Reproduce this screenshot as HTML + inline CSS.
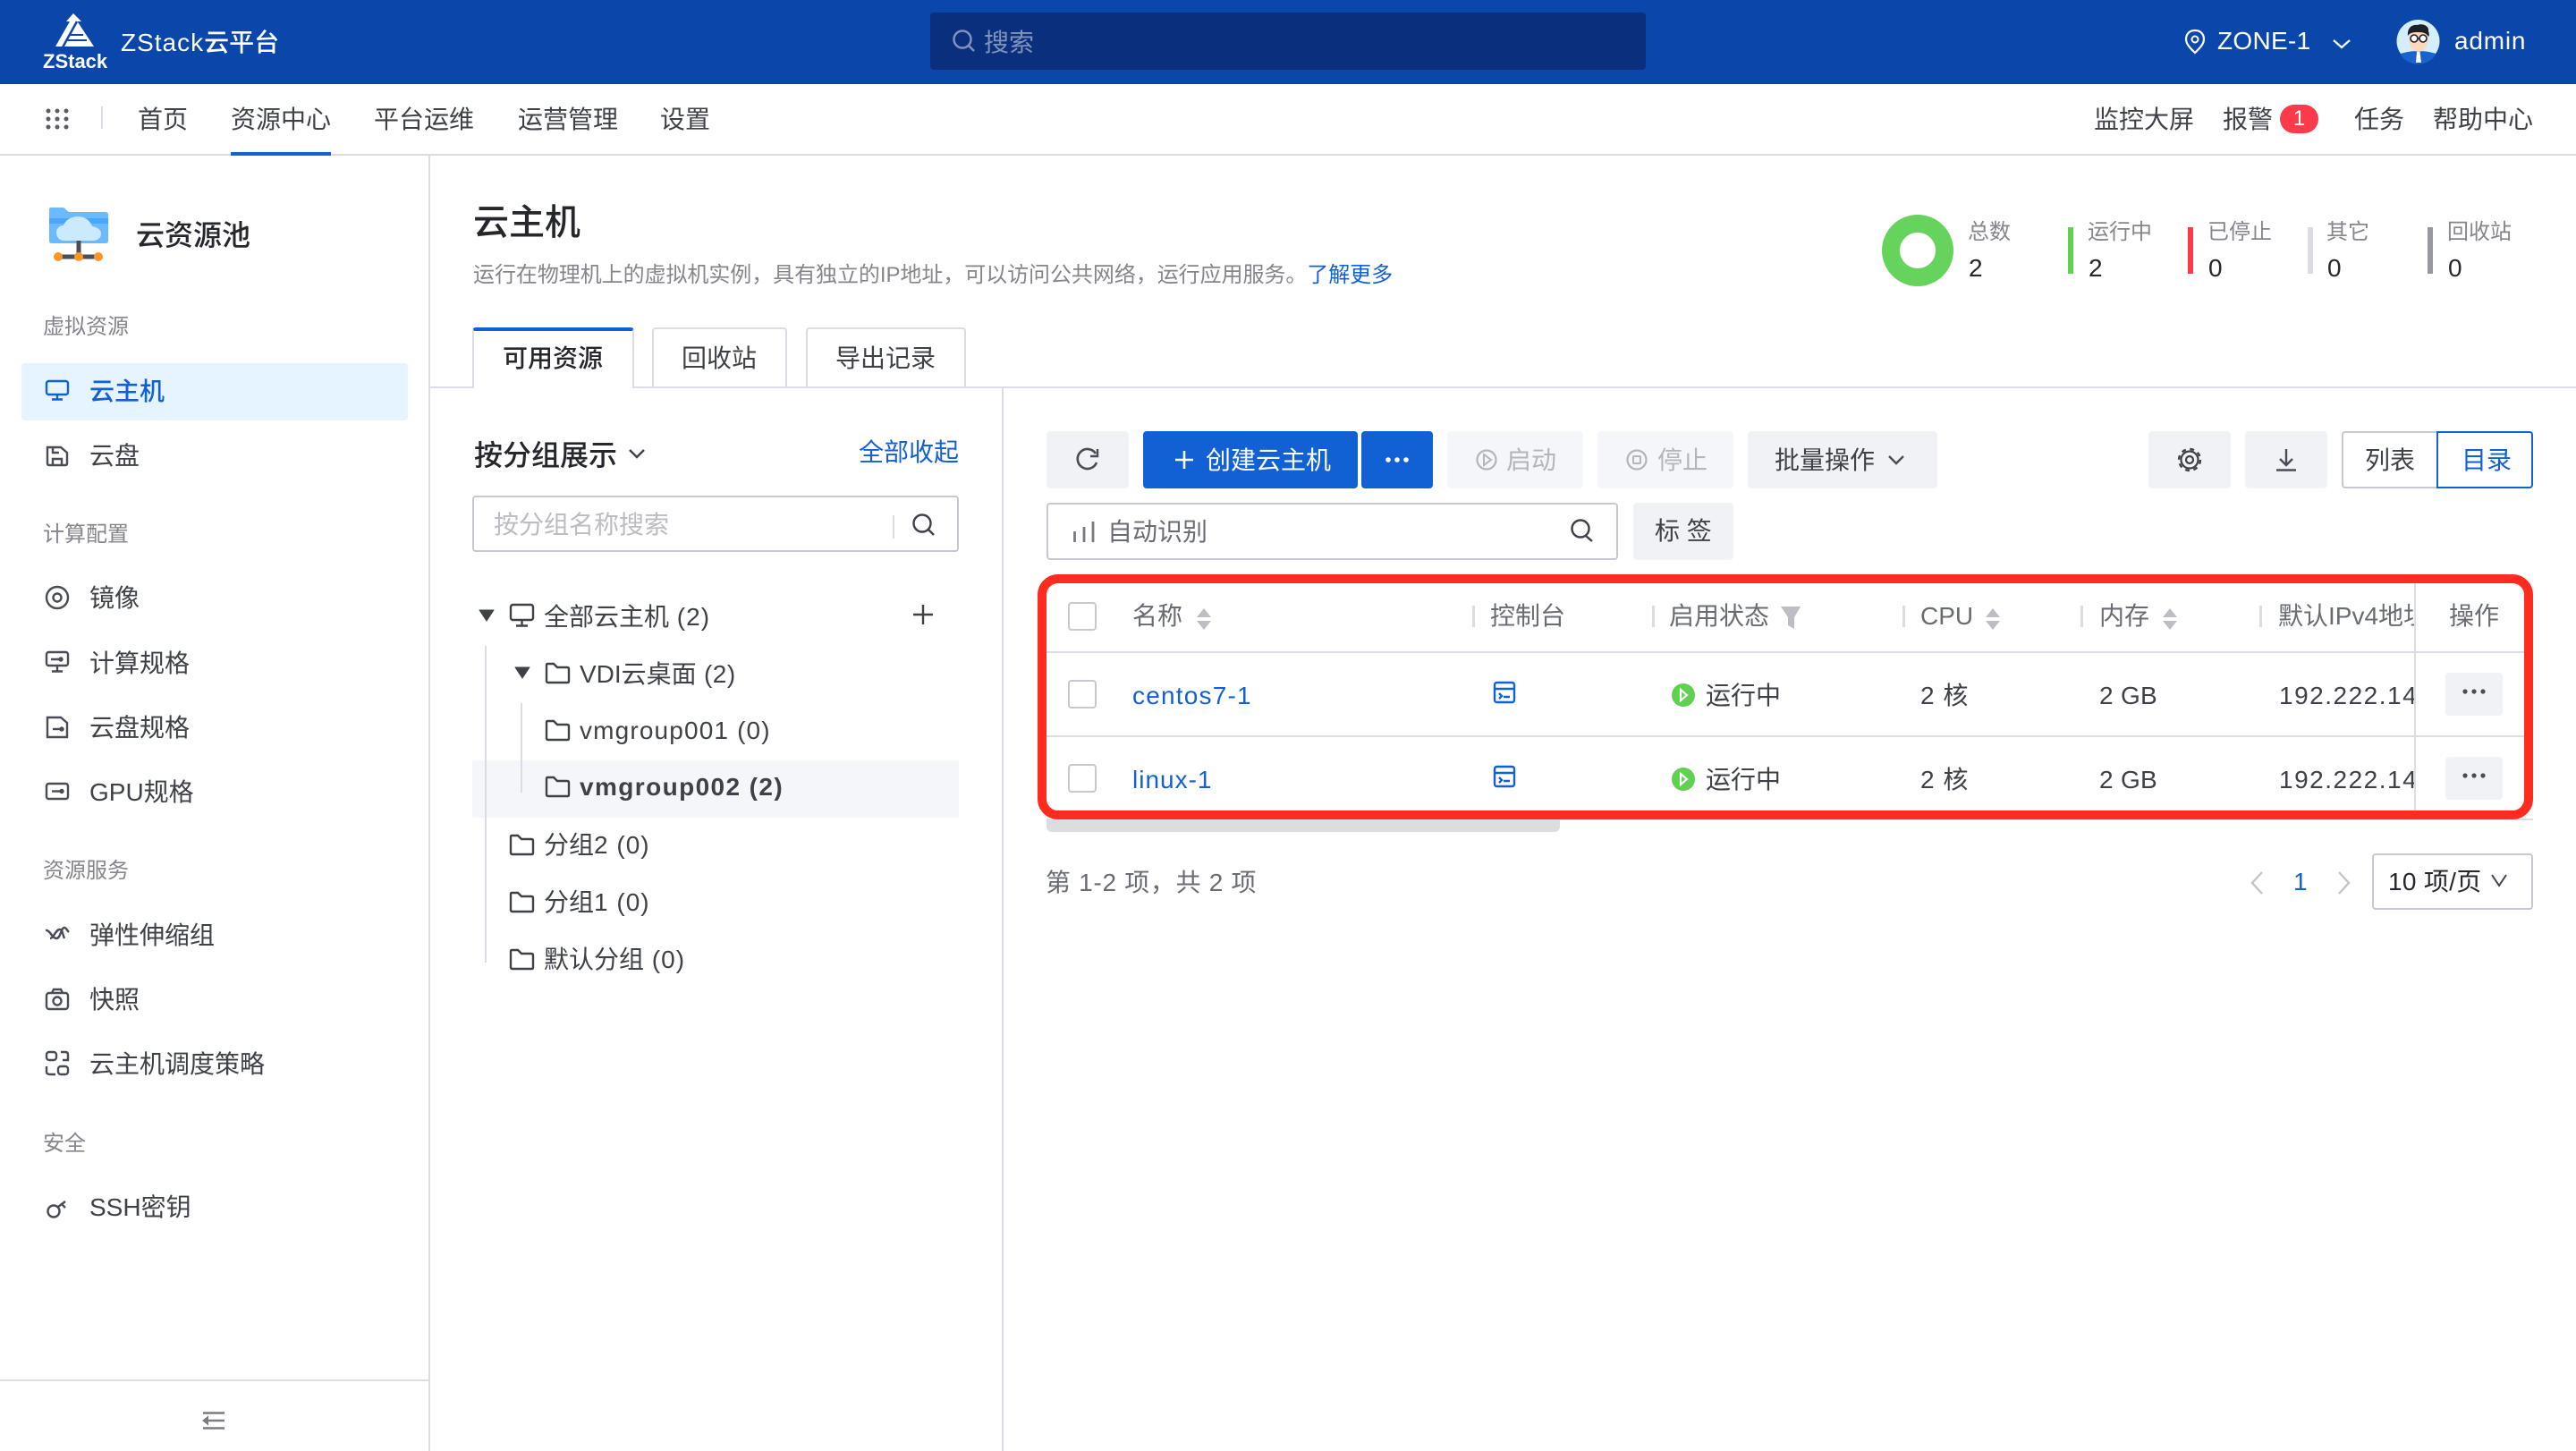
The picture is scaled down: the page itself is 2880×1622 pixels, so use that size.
<!DOCTYPE html>
<html lang="zh-CN">
<head>
<meta charset="utf-8">
<title>ZStack云平台</title>
<style>
html,body{margin:0;padding:0;background:#fff;}
body{position:relative;width:2880px;height:1622px;overflow:hidden;font-family:"Liberation Sans","Noto Sans CJK SC",sans-serif;font-size:28px;color:#3f4148;}
.b{position:absolute;box-sizing:border-box;}
.t{position:absolute;white-space:nowrap;line-height:40px;height:40px;margin:2px 0 0 -1px;z-index:6;}
.n{margin:0;}
.i{margin:1px 0 0 -1px;}
.r{margin:1px 0 0 0;}
.k{letter-spacing:1px;}
.w{color:#fff;}
.s{font-size:24px;color:#85858d;}
.h{color:#6a6c74;}
.bl{color:#1160d4;}
.m{font-weight:500;}
.sv{color:#26272c;}
#ic{position:absolute;left:0;top:0;z-index:5;}
</style>
</head>
<body>
<!-- header -->
<div class="b" style="left:0;top:0;width:2880px;height:94px;background:#0b47ab;"></div>
<div class="b" style="left:1040px;top:14px;width:800px;height:64px;background:#0a2f7c;border-radius:4px;"></div>
<div class="t" style="left:1101px;top:26px;color:#7f93bd;">搜索</div>
<div class="t w n" style="left:48px;top:54px;font-size:22px;font-weight:700;line-height:30px;height:30px;">ZStack</div>
<div class="t w m k" style="left:136px;top:26px;"><span>ZStack</span><span style="letter-spacing:0">云平台</span></div>
<div class="t w n" style="left:2479px;top:26px;letter-spacing:.3px;">ZONE-1</div>
<div class="t w n" style="left:2744px;top:26px;letter-spacing:.8px;">admin</div>

<!-- nav -->
<div class="b" style="left:0;top:172px;width:2880px;height:2px;background:#dcdce4;"></div>
<div class="b" style="left:113px;top:119px;width:2px;height:25px;background:#dcdce4;"></div>
<div class="b" style="left:258px;top:170px;width:112px;height:4px;background:#1160d4;"></div>
<div class="t" style="left:155px;top:112px;">首页</div>
<div class="t" style="left:259px;top:112px;">资源中心</div>
<div class="t" style="left:419px;top:112px;">平台运维</div>
<div class="t" style="left:580px;top:112px;">运营管理</div>
<div class="t" style="left:739px;top:112px;">设置</div>
<div class="t" style="left:2342px;top:112px;">监控大屏</div>
<div class="t" style="left:2486px;top:112px;">报警</div>
<div class="b" style="left:2549px;top:117px;width:43px;height:32px;background:#fb3a4a;border-radius:16px;"></div>
<div class="t w n" style="left:2549px;top:113px;width:43px;text-align:center;font-size:24px;">1</div>
<div class="t" style="left:2633px;top:112px;">任务</div>
<div class="t" style="left:2721px;top:112px;">帮助中心</div>

<!-- sidebar -->
<div class="b" style="left:479px;top:174px;width:2px;height:1448px;background:#dcdce4;"></div>
<div class="b" style="left:0;top:1542px;width:479px;height:2px;background:#dcdce4;"></div>
<div class="t m sv" style="left:153px;top:241px;font-size:32px;">云资源池</div>
<div class="t s r" style="left:48px;top:345px;">虚拟资源</div>
<div class="b" style="left:24px;top:406px;width:432px;height:64px;background:#e6f4ff;border-radius:4px;"></div>
<div class="t bl m i" style="left:101px;top:417px;">云主机</div>
<div class="t i" style="left:101px;top:489px;">云盘</div>
<div class="t s r" style="left:48px;top:577px;">计算配置</div>
<div class="t i" style="left:101px;top:648px;">镜像</div>
<div class="t i" style="left:101px;top:721px;">计算规格</div>
<div class="t i" style="left:101px;top:793px;">云盘规格</div>
<div class="t i" style="left:101px;top:865px;">GPU规格</div>
<div class="t s r" style="left:48px;top:953px;">资源服务</div>
<div class="t i" style="left:101px;top:1025px;">弹性伸缩组</div>
<div class="t i" style="left:101px;top:1097px;">快照</div>
<div class="t i" style="left:101px;top:1169px;">云主机调度策略</div>
<div class="t s r" style="left:48px;top:1258px;">安全</div>
<div class="t i" style="left:101px;top:1329px;">SSH密钥</div>

<!-- page head -->
<div class="t m sv" style="left:530px;top:227px;font-size:40px;">云主机</div>
<div class="t s" style="left:530px;top:286px;letter-spacing:-.06px;">运行在物理机上的虚拟机实例，具有独立的IP地址，可以访问公共网络，运行应用服务。<span class="bl">了解更多</span></div>

<!-- stats -->
<div class="t s" style="left:2201px;top:238px;">总数</div>
<div class="t sv n" style="left:2201px;top:280px;">2</div>
<div class="b" style="left:2312px;top:254px;width:6px;height:52px;background:#5fd04f;"></div>
<div class="t s" style="left:2335px;top:238px;">运行中</div>
<div class="t sv n" style="left:2335px;top:280px;">2</div>
<div class="b" style="left:2446px;top:254px;width:6px;height:52px;background:#fb3a4a;"></div>
<div class="t s" style="left:2469px;top:238px;">已停止</div>
<div class="t sv n" style="left:2469px;top:280px;">0</div>
<div class="b" style="left:2580px;top:254px;width:6px;height:52px;background:#dcdce4;"></div>
<div class="t s" style="left:2602px;top:238px;">其它</div>
<div class="t sv n" style="left:2602px;top:280px;">0</div>
<div class="b" style="left:2714px;top:254px;width:6px;height:52px;background:#97979f;"></div>
<div class="t s" style="left:2737px;top:238px;">回收站</div>
<div class="t sv n" style="left:2737px;top:280px;">0</div>

<!-- tabs -->
<div class="b" style="left:481px;top:432px;width:2399px;height:2px;background:#dcdce4;"></div>
<div class="b" style="left:528px;top:366px;width:181px;height:68px;background:#fff;border:2px solid #dcdce4;border-bottom:none;border-top:4px solid #1160d4;border-radius:4px 4px 0 0;"></div>
<div class="t m sv" style="left:563px;top:379px;">可用资源</div>
<div class="b" style="left:729px;top:366px;width:151px;height:68px;border:2px solid #dcdce4;border-bottom:none;border-radius:4px 4px 0 0;"></div>
<div class="t" style="left:763px;top:379px;">回收站</div>
<div class="b" style="left:901px;top:366px;width:179px;height:68px;border:2px solid #dcdce4;border-bottom:none;border-radius:4px 4px 0 0;"></div>
<div class="t" style="left:935px;top:379px;">导出记录</div>

<!-- group panel -->
<div class="b" style="left:1120px;top:434px;width:2px;height:1188px;background:#dcdce4;"></div>
<div class="t m sv" style="left:531px;top:487px;font-size:32px;">按分组展示</div>
<div class="t bl r" style="left:960px;top:485px;">全部收起</div>
<div class="b" style="left:528px;top:554px;width:544px;height:63px;border:2px solid #c8c8d0;border-radius:4px;"></div>
<div class="t" style="left:553px;top:565px;color:#bcbcc2;">按分组名称搜索</div>
<div class="b" style="left:998px;top:576px;width:2px;height:26px;background:#dcdce4;"></div>
<div class="b" style="left:528px;top:850px;width:544px;height:64px;background:#f5f6fa;"></div>
<div class="b" style="left:542px;top:722px;width:2px;height:354px;background:#dcdce4;"></div>
<div class="b" style="left:582px;top:786px;width:2px;height:100px;background:#dcdce4;"></div>
<div class="t r" style="left:608px;top:669px;">全部云主机<span class="k"> (2)</span></div>
<div class="t r" style="left:648px;top:733px;">VDI云桌面<span style="letter-spacing:.5px"> (2)</span></div>
<div class="t r" style="left:648px;top:796px;letter-spacing:1.15px;">vmgroup001 (0)</div>
<div class="t r" style="left:648px;top:859px;font-weight:700;letter-spacing:1.4px;">vmgroup002 (2)</div>
<div class="t r" style="left:608px;top:924px;">分组<span class="k">2 (0)</span></div>
<div class="t r" style="left:608px;top:988px;">分组<span class="k">1 (0)</span></div>
<div class="t r" style="left:608px;top:1052px;">默认分组<span class="k"> (0)</span></div>

<!-- toolbar -->
<div class="b" style="left:1170px;top:482px;width:92px;height:64px;background:#f1f2f6;border-radius:4px;"></div>
<div class="b" style="left:1278px;top:482px;width:240px;height:64px;background:#1160d4;border-radius:4px;"></div>
<div class="t w r" style="left:1348px;top:494px;">创建云主机</div>
<div class="b" style="left:1522px;top:482px;width:80px;height:64px;background:#1160d4;border-radius:4px;"></div>
<div class="b" style="left:1618px;top:482px;width:152px;height:64px;background:#f5f6fa;border-radius:4px;"></div>
<div class="t r" style="left:1684px;top:494px;color:#b4b4bc;">启动</div>
<div class="b" style="left:1786px;top:482px;width:152px;height:64px;background:#f5f6fa;border-radius:4px;"></div>
<div class="t r" style="left:1853px;top:494px;color:#b4b4bc;">停止</div>
<div class="b" style="left:1954px;top:482px;width:212px;height:64px;background:#f1f2f6;border-radius:4px;"></div>
<div class="t r" style="left:1984px;top:494px;">批量操作</div>
<div class="b" style="left:2402px;top:482px;width:92px;height:64px;background:#f1f2f6;border-radius:4px;"></div>
<div class="b" style="left:2510px;top:482px;width:92px;height:64px;background:#f1f2f6;border-radius:4px;"></div>
<div class="b" style="left:2618px;top:482px;width:108px;height:64px;border:2px solid #c8c8d0;border-right:none;border-radius:4px 0 0 4px;"></div>
<div class="t r" style="left:2644px;top:494px;">列表</div>
<div class="b" style="left:2724px;top:482px;width:108px;height:64px;border:2px solid #1160d4;border-radius:0 4px 4px 0;"></div>
<div class="t bl r" style="left:2752px;top:494px;">目录</div>
<div class="b" style="left:1170px;top:562px;width:639px;height:64px;border:2px solid #c8c8d0;border-radius:4px;"></div>
<div class="t h r" style="left:1238px;top:574px;">自动识别</div>
<div class="b" style="left:1826px;top:562px;width:112px;height:64px;background:#f1f2f6;border-radius:4px;"></div>
<div class="t r" style="left:1850px;top:573px;">标 签</div>

<!-- table -->
<div class="b" style="left:1170px;top:728px;width:1662px;height:2px;background:#dcdce4;"></div>
<div class="b" style="left:1170px;top:822px;width:1662px;height:2px;background:#dcdce4;"></div>
<div class="b" style="left:1170px;top:915px;width:1662px;height:2px;background:#dcdce4;"></div>
<div class="b" style="left:1170px;top:917px;width:574px;height:13px;background:#dcdde1;border-radius:0 0 6px 6px;"></div>
<div class="b" style="left:2699px;top:652px;width:2px;height:254px;background:#dcdce4;"></div>
<div class="b" style="left:1194px;top:673px;width:32px;height:32px;border:2px solid #c8c8d0;border-radius:4px;"></div>
<div class="b" style="left:1194px;top:760px;width:32px;height:32px;border:2px solid #c8c8d0;border-radius:4px;"></div>
<div class="b" style="left:1194px;top:854px;width:32px;height:32px;border:2px solid #c8c8d0;border-radius:4px;"></div>
<div class="b" style="left:1646px;top:677px;width:3px;height:24px;background:#dcdce4;"></div>
<div class="b" style="left:1847px;top:677px;width:3px;height:24px;background:#dcdce4;"></div>
<div class="b" style="left:2127px;top:677px;width:3px;height:24px;background:#dcdce4;"></div>
<div class="b" style="left:2326px;top:677px;width:3px;height:24px;background:#dcdce4;"></div>
<div class="b" style="left:2526px;top:677px;width:3px;height:24px;background:#dcdce4;"></div>
<div class="t h i" style="left:1267px;top:668px;">名称</div>
<div class="t h i" style="left:1667px;top:668px;">控制台</div>
<div class="t h r" style="left:1866px;top:668px;">启用状态</div>
<div class="t h r" style="left:2147px;top:668px;">CPU</div>
<div class="t h r" style="left:2347px;top:668px;">内存</div>
<div class="t h r" style="left:2547px;top:668px;width:152px;overflow:hidden;">默认IPv4地址</div>
<div class="t h i" style="left:2739px;top:668px;">操作</div>

<div class="t bl" style="left:1267px;top:756px;letter-spacing:1.2px;">centos7-1</div>
<div class="t r" style="left:1907px;top:757px;">运行中</div>
<div class="t k r" style="left:2147px;top:757px;">2 核</div>
<div class="t r" style="left:2347px;top:757px;letter-spacing:.3px;">2 GB</div>
<div class="t r" style="left:2548px;top:757px;width:151px;overflow:hidden;letter-spacing:1.5px;">192.222.14.72</div>
<div class="b" style="left:2734px;top:752px;width:64px;height:48px;background:#f1f2f6;border-radius:4px;"></div>

<div class="t bl k" style="left:1267px;top:850px;">linux-1</div>
<div class="t r" style="left:1907px;top:851px;">运行中</div>
<div class="t k r" style="left:2147px;top:851px;">2 核</div>
<div class="t r" style="left:2347px;top:851px;letter-spacing:.3px;">2 GB</div>
<div class="t r" style="left:2548px;top:851px;width:151px;overflow:hidden;letter-spacing:1.5px;">192.222.14.73</div>
<div class="b" style="left:2734px;top:846px;width:64px;height:48px;background:#f1f2f6;border-radius:4px;"></div>

<!-- pagination -->
<div class="t h" style="left:1170px;top:965px;letter-spacing:.7px;">第 1-2 项，共 2 项</div>
<div class="t bl m r" style="left:2564px;top:965px;">1</div>
<div class="b" style="left:2652px;top:954px;width:180px;height:63px;border:2px solid #c8c8d0;border-radius:4px;"></div>
<div class="t sv r" style="left:2670px;top:965px;letter-spacing:.3px;">10 项/页</div>

<!-- icons + red box -->
<svg id="ic" width="2880" height="1622" viewBox="0 0 2880 1622" xmlns="http://www.w3.org/2000/svg" fill="none">
  <!-- logo -->
  <path d="M82 15 L91 24 L86.5 24 L105 52 L62 52 L78 24 L74 24 Z" fill="#fff"/>
  <path d="M86 24 L70 53" stroke="#0b47ab" stroke-width="2.5"/>
  <path d="M78 39 H93 M75 45 H97" stroke="#0b47ab" stroke-width="2"/>
  <!-- header search -->
  <circle cx="1076" cy="44" r="9.5" stroke="#7f93bd" stroke-width="2.5"/><path d="M1083 51 L1089 57" stroke="#7f93bd" stroke-width="2.5"/>
  <!-- pin -->
  <path d="M2454 34 C2447 34 2444 39 2444 44 C2444 50 2451 56 2454 59 C2457 56 2464 50 2464 44 C2464 39 2461 34 2454 34 Z" stroke="#fff" stroke-width="2.2"/><circle cx="2454" cy="44" r="3.5" stroke="#fff" stroke-width="2"/>
  <path d="M2609 45 L2618 53 L2627 45" stroke="#fff" stroke-width="2.2"/>
  <!-- avatar -->
  <circle cx="2703.5" cy="46" r="24" fill="#d4eefd"/>
  <path d="M2684 60 C2690 58 2697 57 2703.5 57 C2710 57 2718 58 2723 60 L2722 63 A24 24 0 0 1 2685 63 Z" fill="#1a62cf"/>
  <path d="M2702 58 h3.500 l1.500 12 h-6 Z" fill="#fff"/>
  <ellipse cx="2704" cy="44" rx="11" ry="14" fill="#fbd9bf"/>
  <path d="M2692 40 C2691 30 2698 27 2703 28 C2707 26 2716 28 2715 35 C2716 37 2716 40 2715 41 C2712 36 2708 36 2702 36 C2697 36 2694 37 2692 40 Z" fill="#1d2026"/>
  <circle cx="2699" cy="43" r="4" fill="#fff" stroke="#1d2026" stroke-width="1.6"/><circle cx="2709" cy="43" r="4" fill="#fff" stroke="#1d2026" stroke-width="1.6"/><path d="M2703 43 h2" stroke="#1d2026" stroke-width="1.5"/>
  <!-- grid -->
  <g fill="#5a5c63"><circle cx="54" cy="124" r="2.5"/><circle cx="64" cy="124" r="2.5"/><circle cx="74" cy="124" r="2.5"/><circle cx="54" cy="133" r="2.5"/><circle cx="64" cy="133" r="2.5"/><circle cx="74" cy="133" r="2.5"/><circle cx="54" cy="142" r="2.5"/><circle cx="64" cy="142" r="2.5"/><circle cx="74" cy="142" r="2.5"/></g>
  <!-- folder logo -->
  <path d="M57 232 H70 C73 232 75 237 78 237 H118 Q121 237 121 240 V269 Q121 272 118 272 H58 Q55 272 55 269 V234 Q55 232 57 232 Z" fill="#6bb9ff"/>
  <rect x="55" y="244" width="66" height="6" fill="#4aa6fb"/>
  <path d="M72 269 C65 269 63 263 63 260 C63 255 67 252 71 252 C73 246 80 242 87 242 C95 242 101 247 103 253 C109 254 113 257 113 261 C113 266 109 269 104 269 Z" fill="#cbeaff"/>
  <rect x="85.500" y="269" width="5" height="16" fill="#4a4f5a"/><rect x="65" y="284.500" width="45" height="5" fill="#4a4f5a"/>
  <circle cx="65" cy="287" r="5" fill="#ff9524"/><circle cx="88" cy="287" r="5" fill="#ff9524"/><circle cx="110" cy="287" r="5" fill="#ff9524"/>
  <!-- sidebar icons -->
  <g stroke="#1160d4" stroke-width="2.4"><rect x="52" y="426" width="24" height="15" rx="2.5"/><path d="M64 441 V446 M58 446.500 H70"/></g>
  <g stroke="#4a4c55" stroke-width="2.4">
    <path d="M53 500 H68 L75 506 V518 Q75 520 73 520 H55 Q53 520 53 518 Z"/><path d="M59 500 V506 H66 M59 520 V513 H69 V520"/>
    <circle cx="64" cy="668" r="12"/><circle cx="64" cy="668" r="4.5"/>
    <rect x="52" y="729" width="24" height="15" rx="2.5"/><path d="M64 744 V750 M58 750.500 H70 M57 737 H69"/><circle cx="68" cy="737" r="1.5"/>
    <path d="M53 802 H68 L75 808 V824 H53 Z"/><path d="M59 815 H70"/><circle cx="69" cy="815" r="1.5"/>
    <rect x="52" y="876" width="24" height="17" rx="2.5"/><path d="M58 884.500 H70"/><circle cx="69" cy="884.500" r="1.5"/>
    <path d="M51 1040 C56 1039 58 1049 63 1049 C68 1049 68 1037 72 1037 C74 1037 75 1040 77 1042 M56 1049 C60 1049 62 1039 67 1039 C70 1039 70 1045 72 1049"/>
    <rect x="52" y="1110" width="24" height="18" rx="3"/><circle cx="64" cy="1119" r="4.500"/><path d="M58 1110 L60 1106 H68 L70 1110"/>
    <rect x="52" y="1176" width="11" height="9" rx="3"/><path d="M68 1176 H73 Q76 1176 76 1179 V1185 H70"/><path d="M52 1192 V1198 Q52 1201 56 1201 H62"/><rect x="65" y="1192" width="11" height="9" rx="3"/>
    <circle cx="60" cy="1354" r="6.500"/><path d="M65 1349 L73 1343 M69 1346 L73 1350"/>
  </g>
  <!-- collapse -->
  <path d="M227 1579.500 H251 M230 1588 H251 M227 1596.500 H251" stroke="#7a7c84" stroke-width="2.6"/><path d="M226 1588 L233 1582.500 V1593.500 Z" fill="#7a7c84"/>
  <!-- donut -->
  <circle cx="2144" cy="280" r="30" stroke="#66d45c" stroke-width="20"/>
  <!-- group title chevron -->
  <path d="M704 503 L712 511 L720 503" stroke="#3f4148" stroke-width="2.4"/>
  <!-- group search -->
  <circle cx="1031" cy="585" r="9.500" stroke="#3f4148" stroke-width="2.4"/><path d="M1038 592 L1044 598" stroke="#3f4148" stroke-width="2.4"/>
  <!-- tree -->
  <path d="M536 682 H552 L544 694 Z" fill="#3f4148" stroke="#3f4148" stroke-linejoin="round"/>
  <path d="M576 746 H592 L584 758 Z" fill="#3f4148" stroke="#3f4148" stroke-linejoin="round"/>
  <g stroke="#3f4148" stroke-width="2.4">
    <rect x="571" y="676" width="25" height="17" rx="2.500"/><path d="M583.500 693 V699 M577 699.500 H590"/>
    <path d="M612 742 Q611 742 611 744 V761 Q611 763 613 763 H635 Q636 763 636 761 V748 Q636 746 634 746 H623 L619 742 Z"/>
    <path d="M612 806 Q611 806 611 808 V825 Q611 827 613 827 H635 Q636 827 636 825 V812 Q636 810 634 810 H623 L619 806 Z"/>
    <path d="M612 869 Q611 869 611 871 V888 Q611 890 613 890 H635 Q636 890 636 888 V875 Q636 873 634 873 H623 L619 869 Z"/>
    <path d="M572 934 Q571 934 571 936 V953 Q571 955 573 955 H595 Q596 955 596 953 V940 Q596 938 594 938 H583 L579 934 Z"/>
    <path d="M572 998 Q571 998 571 1000 V1017 Q571 1019 573 1019 H595 Q596 1019 596 1017 V1004 Q596 1002 594 1002 H583 L579 998 Z"/>
    <path d="M572 1062 Q571 1062 571 1064 V1081 Q571 1083 573 1083 H595 Q596 1083 596 1081 V1068 Q596 1066 594 1066 H583 L579 1062 Z"/>
    <path d="M1021 687 H1043 M1032 676 V698"/>
  </g>
  <!-- toolbar icons -->
  <path d="M1225 507 A11 11 0 1 0 1226 517" stroke="#4a4c55" stroke-width="2.6"/><path d="M1227 502 V510 H1219" stroke="#4a4c55" stroke-width="2.4"/>
  <path d="M1314 514 H1334 M1324 504 V524" stroke="#fff" stroke-width="2.6"/>
  <g fill="#fff"><circle cx="1552" cy="514" r="2.800"/><circle cx="1562" cy="514" r="2.800"/><circle cx="1572" cy="514" r="2.800"/></g>
  <circle cx="1662" cy="514" r="10.500" stroke="#b4b4bc" stroke-width="2.2"/><path d="M1659 508 L1667 514 L1659 520 Z" stroke="#b4b4bc" stroke-width="2"/>
  <circle cx="1830" cy="514" r="10.500" stroke="#b4b4bc" stroke-width="2.2"/><rect x="1826" y="510" width="8" height="8" rx="1" stroke="#b4b4bc" stroke-width="2"/>
  <path d="M2112 510 L2120 518 L2128 510" stroke="#4a4c55" stroke-width="2.4"/>
  <circle cx="2448" cy="514" r="4" stroke="#3f4148" stroke-width="2.2"/>
  <circle cx="2448" cy="514" r="9.500" stroke="#3f4148" stroke-width="2.2"/>
  <circle cx="2448" cy="514" r="12" stroke="#3f4148" stroke-width="2.4" stroke-dasharray="4.800 4.620"/>
  <path d="M2556 502 V519 M2549 513 L2556 520 L2563 513 M2545 525.500 H2567" stroke="#4a4c55" stroke-width="2.4"/>
  <path d="M1201.500 594 V606 M1212 589 V606 M1222 583 V606" stroke="#77797f" stroke-width="2.8"/>
  <circle cx="1767" cy="591" r="9.500" stroke="#3f4148" stroke-width="2.400"/><path d="M1773 599 L1780 605" stroke="#3f4148" stroke-width="2.400"/>
  <!-- sort arrows -->
  <g fill="#bdbdc4">
    <path d="M1338 690 L1346 680 L1354 690 Z M1338 694 L1346 704 L1354 694 Z"/>
    <path d="M2220 690 L2228 680 L2236 690 Z M2220 694 L2228 704 L2236 694 Z"/>
    <path d="M2418 690 L2426 680 L2434 690 Z M2418 694 L2426 704 L2434 694 Z"/>
    <path d="M1991 678 H2013 L2006 690 V703 L1999 699 V690 Z"/>
  </g>
  <!-- console icons -->
  <g stroke="#1160d4" stroke-width="2.400">
    <rect x="1671" y="763" width="22" height="22" rx="2.500"/><path d="M1671 770 H1693 M1676 775 L1679 778 L1676 781 M1681 779 H1688"/>
    <rect x="1671" y="857" width="22" height="22" rx="2.500"/><path d="M1671 864 H1693 M1676 869 L1679 872 L1676 875 M1681 873 H1688"/>
  </g>
  <!-- status -->
  <circle cx="1882" cy="777" r="13" fill="#5fd04f"/><path d="M1879 771 L1886 777 L1879 783 Z" stroke="#fff" stroke-width="2.200"/>
  <circle cx="1882" cy="871" r="13" fill="#5fd04f"/><path d="M1879 865 L1886 871 L1879 877 Z" stroke="#fff" stroke-width="2.200"/>
  <!-- op dots -->
  <g fill="#4a4c55"><circle cx="2756" cy="773" r="2.600"/><circle cx="2766" cy="773" r="2.600"/><circle cx="2776" cy="773" r="2.600"/><circle cx="2756" cy="867" r="2.600"/><circle cx="2766" cy="867" r="2.600"/><circle cx="2776" cy="867" r="2.600"/></g>
  <!-- pagination -->
  <path d="M2529 975 L2518 987 L2529 999" stroke="#c4c4ca" stroke-width="2.400"/>
  <path d="M2615 975 L2626 987 L2615 999" stroke="#c4c4ca" stroke-width="2.400"/>
  <path d="M2786 978 L2794 990 L2802 978" stroke="#3f4148" stroke-width="2"/>
  <!-- red box -->
  <rect x="1165" y="647" width="1662" height="264" rx="18" stroke="#fe2c1f" stroke-width="10"/>
</svg>
</body>
</html>
